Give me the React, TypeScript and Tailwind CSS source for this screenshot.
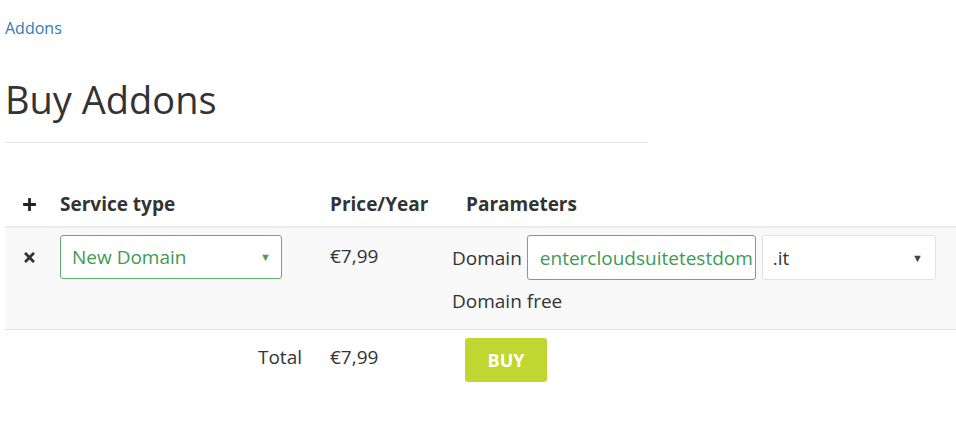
import React from 'react'
import { FaPlus, FaTimes } from 'react-icons/fa'

const font = { fontFamily: '"Open Sans", "Noto Sans", sans-serif' }

export default function App() {
    return (
        <div className="min-h-[429px] bg-white pl-[5px] text-[#333]" style={font}>
            <div className="pt-[18px] text-[16px] leading-[20px]">
                <a href="#" className="text-[#337ab7]">Addons</a>
            </div>
            <h1 className="mt-[40px] text-[38px] font-normal leading-[42px] text-[#333]">Buy Addons</h1>
            <div className="mt-[22px] w-[643px] border-b border-[#e5e5e5]" />

            {/* addons table */}
            <div className="mt-[38px]">
                <div className="grid grid-cols-[45px_270px_122px_1fr] border-b-2 border-[#ececec] pb-[9px] pt-[10px] text-[19px] font-bold leading-[26px]">
                    <div className="flex items-center justify-center pl-[4px]">
                        <FaPlus className="h-[15px] w-[15px] text-[#222]" />
                    </div>
                    <div className="px-[10px]">Service type</div>
                    <div className="px-[10px]">Price/Year</div>
                    <div className="pl-[24px]">Parameters</div>
                </div>

                <div className="grid grid-cols-[45px_270px_122px_1fr] border-b border-[#e3e3e3] bg-[#f9f9f9] pb-[15px] pt-[7px] text-[19px] leading-[26px]">
                    <div className="flex justify-center pl-[4px] pt-[15px]">
                        <FaTimes className="h-[15px] w-[15px] text-[#333]" />
                    </div>
                    <div className="px-[10px]">
                        <div className="flex h-[44px] w-[222px] items-center justify-between rounded-[3px] border border-[#5cb36a] bg-white pl-[11px] pr-[10px] text-[#3f9a53]">
                            <span>New Domain</span>
                            <span className="text-[11px] text-[#4a9e5c]">▼</span>
                        </div>
                    </div>
                    <div className="px-[10px] pt-[8px]">€7,99</div>
                    <div className="px-[10px]">
                        <div className="flex items-center gap-[5px]">
                            <span>Domain</span>
                            <div className="flex h-[45px] w-[229px] items-center rounded-[3px] border border-[#5cb36a] bg-white pl-[12px] pr-[3px]">
                                <input
                                    readOnly
                                    value="entercloudsuitetestdomain"
                                    className="w-full min-w-0 bg-transparent text-[19px] text-[#3f9a53] outline-none"
                                />
                            </div>
                            <div className="ml-[1px] flex h-[45px] w-[174px] items-center justify-between rounded-[3px] border border-[#e2e2e2] bg-white pl-[10px] pr-[12px]">
                                <span>.it</span>
                                <span className="text-[11px] text-[#444]">▼</span>
                            </div>
                        </div>
                        <div className="mt-[8px]">Domain free</div>
                    </div>
                </div>

                <div className="grid grid-cols-[45px_270px_122px_1fr] pt-[8px] text-[19px] leading-[26px]">
                    <div />
                    <div className="pl-[10px] pr-[18px] pt-[6px] text-right">Total</div>
                    <div className="px-[10px] pt-[6px]">€7,99</div>
                    <div className="pl-[23px]">
                        <button className="h-[44px] w-[82px] rounded-[3px] bg-[#bfd730] text-[18px] font-bold text-white">BUY</button>
                    </div>
                </div>
            </div>
        </div>
    )
}
